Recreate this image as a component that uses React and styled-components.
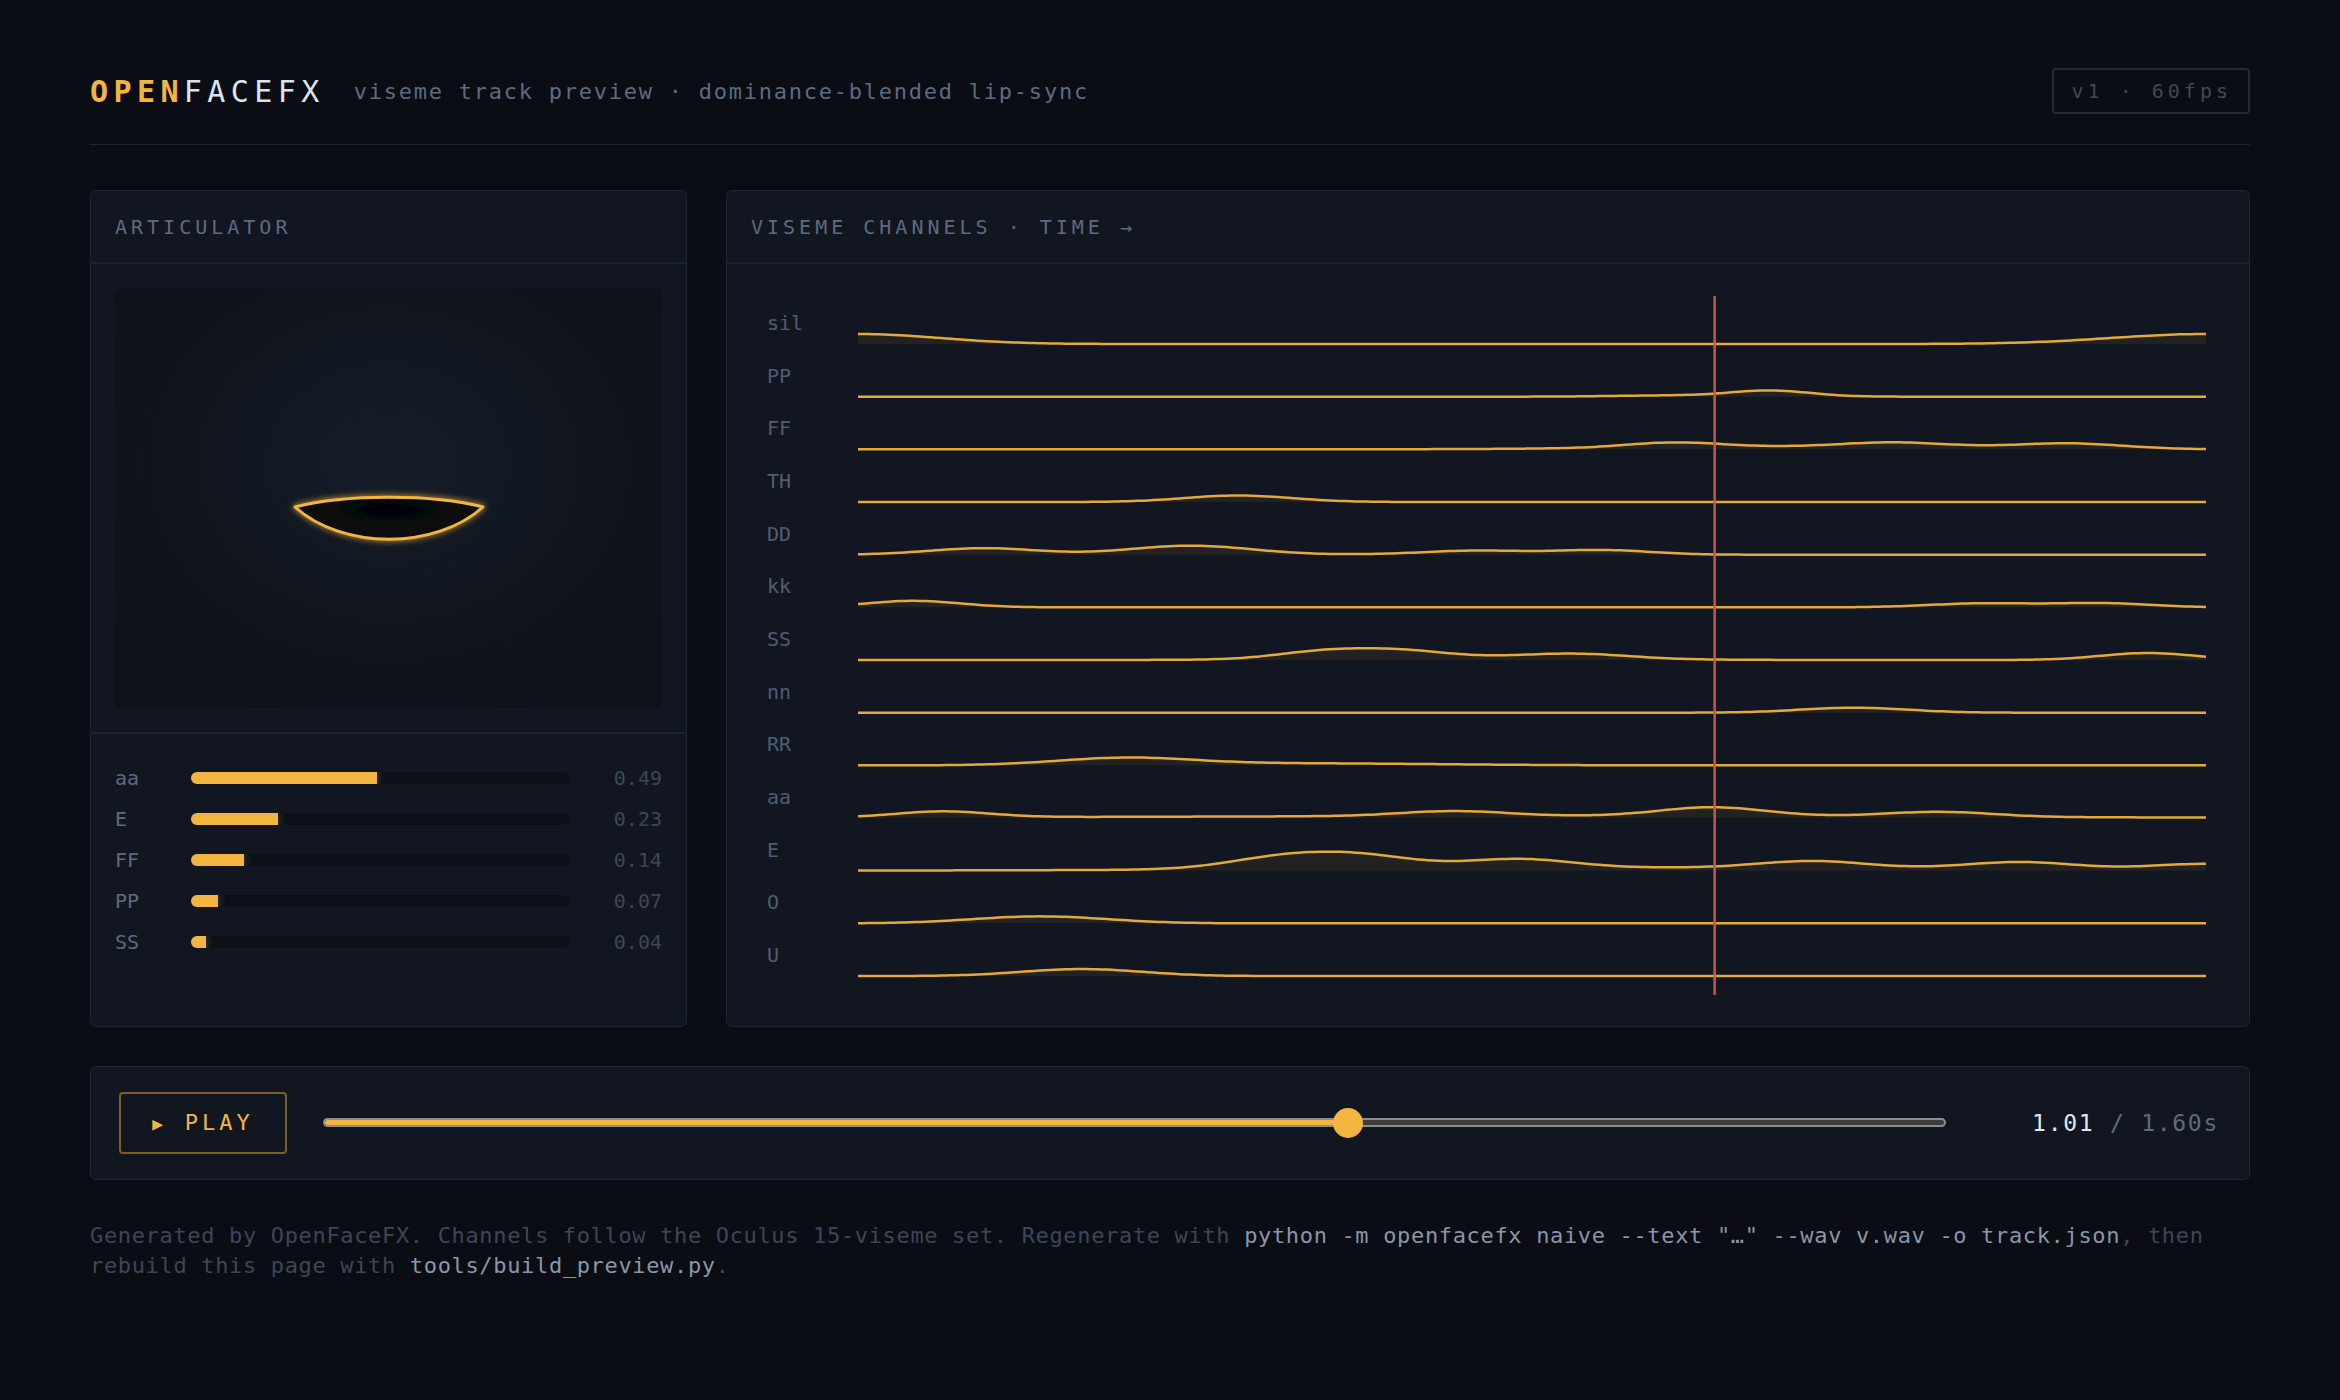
import React from 'react';
import styled, { createGlobalStyle } from 'styled-components';

const GOLD = '#f2b640';
const MUTED = '#5d6b80';
const DIM = '#3c4657';

const CHANNELS = [
  { id: 'sil', bumps: [[0, 10, 0.06], [1.0, 10, 0.07]] },
  { id: 'PP', bumps: [[0.677, 6, 0.03], [0.6, 1.2, 0.04]] },
  { id: 'FF', bumps: [[0.605, 5, 0.035], [0.77, 5, 0.04], [0.898, 5.5, 0.04], [0.69, 2.5, 0.12]] },
  { id: 'TH', bumps: [[0.282, 6.5, 0.04]] },
  { id: 'DD', bumps: [[0.093, 6.5, 0.04], [0.247, 9, 0.045], [0.458, 4, 0.04], [0.553, 4.5, 0.035]] },
  { id: 'kk', bumps: [[0.041, 6.5, 0.035], [0.835, 4, 0.04], [0.924, 4, 0.035]] },
  { id: 'SS', bumps: [[0.346, 7.5, 0.035], [0.404, 7, 0.035], [0.531, 5, 0.04], [0.957, 7, 0.035], [0.45, 2, 0.1]] },
  { id: 'nn', bumps: [[0.739, 5, 0.04]] },
  { id: 'RR', bumps: [[0.198, 7, 0.05], [0.33, 2, 0.1]] },
  { id: 'aa', bumps: [[0.063, 6, 0.035], [0.442, 5, 0.04], [0.634, 9, 0.04], [0.802, 5, 0.04], [0.5, 2, 0.3]] },
  { id: 'E', bumps: [[0.313, 11, 0.04], [0.374, 12, 0.04], [0.49, 9, 0.04], [0.708, 7, 0.04], [0.863, 7, 0.04], [1.0, 6, 0.04], [0.6, 3, 0.25]] },
  { id: 'O', bumps: [[0.135, 7, 0.05]] },
  { id: 'U', bumps: [[0.166, 7, 0.045]] },
];

const WEIGHTS = [
  { id: 'aa', value: 0.49 },
  { id: 'E', value: 0.23 },
  { id: 'FF', value: 0.14 },
  { id: 'PP', value: 0.07 },
  { id: 'SS', value: 0.04 },
];

const PLOT_W = 1348;
const PLOT_H = 699;
const ROW_H = 52.67;
const TIME = 1.01;
const DURATION = 1.6;
// the track renders frames on a fixed grid, so the cursor sits a hair past t/duration
const CURSOR = 0.6355;

function curve(bumps, baseline) {
  const pts = [];
  for (let i = 0; i <= 260; i++) {
    const t = i / 260;
    let v = 0;
    bumps.forEach(([c, a, s]) => {
      v += a * Math.exp(-((t - c) * (t - c)) / (2 * s * s));
    });
    pts.push([t * PLOT_W, baseline - v]);
  }
  const line = pts.map(([x, y], i) => `${i ? 'L' : 'M'}${x.toFixed(1)} ${y.toFixed(2)}`).join(' ');
  const area = `${line} L${PLOT_W} ${baseline} L0 ${baseline} Z`;
  return { line, area };
}

const GlobalStyle = createGlobalStyle`
  html, body {
    margin: 0;
    background: #0a0d14;
  }
  body {
    font-family: "DejaVu Sans Mono", monospace;
    color: #dbe3ee;
  }
`;

function App() {
  const progress = TIME / DURATION;
  return (
    <Page>
      <GlobalStyle />
      <Header>
        <Brand>
          <strong>OPEN</strong>FACEFX
        </Brand>
        <Subtitle>viseme track preview · dominance-blended lip-sync</Subtitle>
        <Badge>v1 · 60fps</Badge>
      </Header>

      <Main>
        <Panel>
          <PanelHead>ARTICULATOR</PanelHead>
          <StageWrap>
            <Stage>
              <svg width="548" height="420" viewBox="0 0 548 420">
                <defs>
                  <radialGradient id="mouthIn" cx="50%" cy="30%" r="60%">
                    <stop offset="0%" stopColor="#030405" />
                    <stop offset="100%" stopColor="#0b0d12" />
                  </radialGradient>
                  <filter id="glow" x="-20%" y="-40%" width="140%" height="180%">
                    <feGaussianBlur stdDeviation="3" result="b" />
                    <feMerge>
                      <feMergeNode in="b" />
                      <feMergeNode in="SourceGraphic" />
                    </feMerge>
                  </filter>
                </defs>
                <path
                  d="M180 219 C230 206 318 206 368 219 C320 262 228 262 180 219 Z"
                  fill="url(#mouthIn)"
                  stroke={GOLD}
                  strokeWidth="3"
                  strokeLinejoin="round"
                  filter="url(#glow)"
                />
              </svg>
            </Stage>
          </StageWrap>
          <Weights>
            {WEIGHTS.map((w) => (
              <WeightRow key={w.id}>
                <WeightLabel>{w.id}</WeightLabel>
                <Track>
                  <Fill style={{ width: `${w.value * 100}%` }} />
                </Track>
                <WeightValue>{w.value.toFixed(2)}</WeightValue>
              </WeightRow>
            ))}
          </Weights>
        </Panel>

        <Panel>
          <PanelHead>VISEME CHANNELS · TIME →</PanelHead>
          <ChartBody>
            <Labels>
              {CHANNELS.map((c) => (
                <ChannelLabel key={c.id}>{c.id}</ChannelLabel>
              ))}
            </Labels>
            <Plot viewBox={`0 0 ${PLOT_W} ${PLOT_H}`} width={PLOT_W} height={PLOT_H}>
              {CHANNELS.map((c, k) => {
                const base = 48 + k * ROW_H;
                const { line, area } = curve(c.bumps, base);
                return (
                  <g key={c.id}>
                    <path d={area} fill="rgba(242,182,64,0.08)" />
                    <path d={line} fill="none" stroke="#e3a93b" strokeWidth="2.5" strokeLinejoin="round" />
                  </g>
                );
              })}
              <line
                x1={CURSOR * PLOT_W}
                x2={CURSOR * PLOT_W}
                y1="0"
                y2={PLOT_H}
                stroke="#c4584b"
                strokeWidth="2.5"
              />
            </Plot>
          </ChartBody>
        </Panel>
      </Main>

      <Transport>
        <PlayButton type="button">
          <span>▶</span> PLAY
        </PlayButton>
        <Scrubber>
          <ScrubTrack>
            <ScrubFill style={{ width: `${progress * 100}%` }} />
          </ScrubTrack>
          <Thumb style={{ left: `${progress * 100}%` }} />
        </Scrubber>
        <Clock>
          {TIME.toFixed(2)} <em>/ {DURATION.toFixed(2)}s</em>
        </Clock>
      </Transport>

      <Footer>
        Generated by OpenFaceFX. Channels follow the Oculus 15-viseme set. Regenerate with{' '}
        <code>python -m openfacefx naive --text "…" --wav v.wav -o track.json</code>, then rebuild this
        page with <code>tools/build_preview.py</code>.
      </Footer>
    </Page>
  );
}

const Page = styled.div`
  padding: 68px 90px 80px;
`;

const Header = styled.header`
  display: flex;
  align-items: center;
  padding-bottom: 30px;
  border-bottom: 1px solid #1e2531;
`;

const Brand = styled.h1`
  margin: 0;
  font-size: 30px;
  font-weight: 400;
  letter-spacing: 0.18em;
  color: #dbe3ee;

  strong {
    color: ${GOLD};
    font-weight: 700;
  }
`;

const Subtitle = styled.span`
  margin-left: 29px;
  font-size: 22px;
  letter-spacing: 0.08em;
  color: ${MUTED};
`;

const Badge = styled.span`
  margin-left: auto;
  padding: 10px 16px 10px 18px;
  border: 2px solid #222a36;
  border-radius: 4px;
  font-size: 20px;
  line-height: 22px;
  letter-spacing: 0.2em;
  color: #3f4959;
`;

const Main = styled.main`
  display: grid;
  grid-template-columns: 597px 1fr;
  gap: 39px;
  margin-top: 45px;
`;

const Panel = styled.section`
  display: flex;
  flex-direction: column;
  background: #121620;
  border: 1px solid #1f2633;
  border-radius: 6px;
  overflow: hidden;
`;

const PanelHead = styled.div`
  height: 71px;
  display: flex;
  align-items: center;
  padding: 0 24px;
  border-bottom: 2px solid #1c2330;
  font-size: 20px;
  letter-spacing: 0.2em;
  color: ${MUTED};
`;

const StageWrap = styled.div`
  padding: 24px;
  border-bottom: 2px solid #1c2330;
`;

const Stage = styled.div`
  height: 420px;
  border-radius: 6px;
  background: radial-gradient(ellipse 65% 70% at 50% 42%, #161d29 0%, #10151d 60%, #0d1118 100%);

  svg {
    display: block;
  }
`;

const Weights = styled.div`
  padding: 23px 24px 24px;
`;

const WeightRow = styled.div`
  display: grid;
  grid-template-columns: 76px 1fr 92px;
  align-items: center;
  height: 41px;
`;

const WeightLabel = styled.span`
  font-size: 20px;
  color: ${MUTED};
`;

const Track = styled.div`
  height: 12px;
  border-radius: 6px;
  background: #0c1017;
  overflow: hidden;
`;

const Fill = styled.div`
  height: 100%;
  background: ${GOLD};
  box-shadow: 0 0 10px rgba(242, 182, 64, 0.35);
`;

const WeightValue = styled.span`
  text-align: right;
  font-size: 20px;
  color: ${DIM};
`;

const ChartBody = styled.div`
  display: grid;
  grid-template-columns: 91px 1fr;
  padding: 32px 40px 30px;
`;

const Labels = styled.div`
  display: flex;
  flex-direction: column;
  padding-top: 15px;
`;

const ChannelLabel = styled.span`
  height: ${ROW_H}px;
  font-size: 20px;
  line-height: 24px;
  color: #505d72;
`;

const Plot = styled.svg`
  display: block;
  overflow: visible;
`;

const Transport = styled.div`
  display: flex;
  align-items: center;
  gap: 36px;
  margin-top: 39px;
  padding: 25px 30px 25px 28px;
  background: #121620;
  border: 1px solid #1f2633;
  border-radius: 6px;
`;

const PlayButton = styled.button`
  width: 168px;
  height: 62px;
  background: transparent;
  border: 2px solid #7a5e24;
  border-radius: 4px;
  font-family: "DejaVu Sans Mono", monospace;
  font-size: 22px;
  letter-spacing: 0.18em;
  color: ${GOLD};

  span {
    font-size: 18px;
    letter-spacing: 0.25em;
  }
`;

const Scrubber = styled.div`
  position: relative;
  flex: 1;
  height: 30px;
  display: flex;
  align-items: center;
`;

const ScrubTrack = styled.div`
  width: 100%;
  height: 9px;
  box-sizing: border-box;
  border: 2px solid #8d8d8d;
  border-radius: 5px;
  background: #3d3d3d;
  overflow: hidden;
`;

const ScrubFill = styled.div`
  height: 100%;
  background: ${GOLD};
`;

const Thumb = styled.span`
  position: absolute;
  top: 0;
  width: 30px;
  height: 30px;
  margin-left: -15px;
  border-radius: 50%;
  background: ${GOLD};
`;

const Clock = styled.div`
  width: 237px;
  text-align: right;
  font-size: 23px;
  letter-spacing: 0.075em;
  color: #e2e8f0;

  em {
    font-style: normal;
    color: ${MUTED};
  }
`;

const Footer = styled.p`
  margin: 41px 0 0;
  font-size: 22px;
  line-height: 30px;
  letter-spacing: 0.03em;
  color: ${DIM};

  code {
    font-family: inherit;
    color: #8a96a8;
  }
`;

export default App;
